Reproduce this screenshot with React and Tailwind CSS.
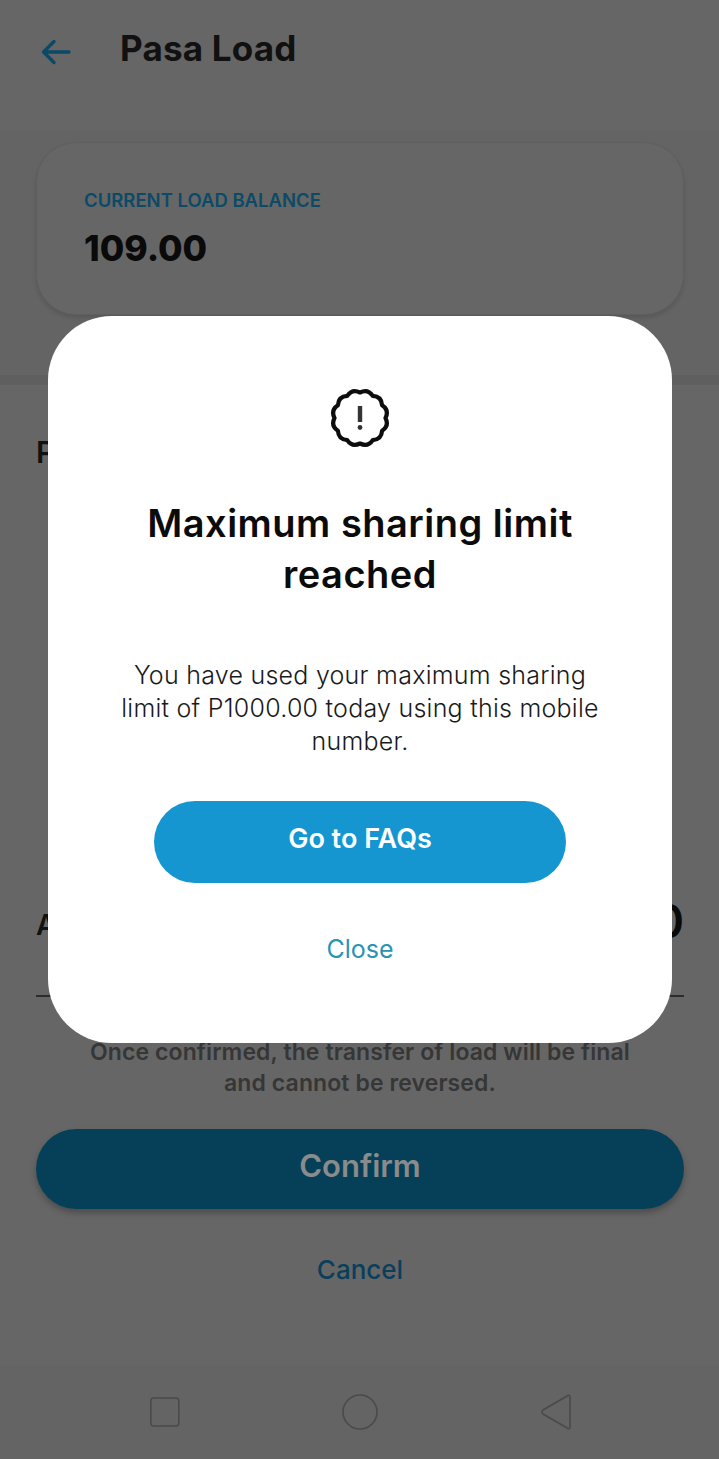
import React from 'react';

const font = 'font-["Inter","Liberation_Sans",sans-serif]';

// 12 scallops around the centre, with a dip straight up at the top
const badgePath = () => {
  const pt = (r, deg) => {
    const a = (deg * Math.PI) / 180;
    return `${(30 + r * Math.cos(a)).toFixed(2)} ${(30 + r * Math.sin(a)).toFixed(2)}`;
  };
  let d = `M${pt(25.5, -90)}`;
  for (let i = 0; i < 12; i++) {
    const start = -90 + i * 30;
    d += ` Q${pt(30.5, start + 15)} ${pt(25.5, start + 30)}`;
  }
  return d + ' Z';
};

const NavIcons = () => (
  <div className="mt-auto h-[94px] bg-[#646464] flex items-center justify-center gap-[162px] pl-[3px] pb-[1px]">
    <svg width="30" height="32" viewBox="0 0 30 32" fill="none" stroke="#4a4a4a" strokeWidth="1.6">
      <rect x="0.8" y="2" width="28" height="28" rx="3" />
    </svg>
    <svg width="36" height="36" viewBox="0 0 36 36" fill="none" stroke="#4a4a4a" strokeWidth="1.6">
      <circle cx="18" cy="18" r="17" />
    </svg>
    <svg width="32" height="36" viewBox="0 0 32 36" fill="none" stroke="#4a4a4a" strokeWidth="1.6">
      <path d="M28 1.5 L3 16 Q1 18 3 20 L28 34.5 Q30 35 30 33 V3 Q30 1 28 1.5 Z" />
    </svg>
  </div>
);

const Modal = () => (
  <div className="absolute left-[48px] top-[316px] w-[624px] h-[727px] bg-white rounded-[64px] flex flex-col items-center pt-[72px]">
    <svg width="60" height="60" viewBox="0 0 60 60" fill="none" stroke="#0d0d0d" strokeWidth="4.2" strokeLinejoin="round">
      <path d={badgePath()} />
      <path d="M30 18 V34" strokeWidth="4.4" stroke="#333333" />
      <circle cx="30" cy="39.5" r="2.4" fill="#333333" stroke="none" />
    </svg>
    <h2 className="mt-[50px] w-[480px] text-center text-[38px] leading-[51px] font-semibold text-[#0b0b0b] tracking-[0.5px]">
      Maximum sharing limit reached
    </h2>
    <p className="mt-[59px] w-[500px] text-center text-[25px] leading-[33px] font-light text-[#1a1a1a] tracking-[0.25px]">
      You have used your maximum sharing limit of P1000.00 today using this mobile number.
    </p>
    <button className="mt-[43px] w-[412px] h-[82px] pb-[5px] rounded-full bg-[#1596d1] text-white text-[27px] font-semibold">
      Go to FAQs
    </button>
    <span className="mt-[48px] text-[25px] leading-[36px] text-[#2a93b4]">Close</span>
  </div>
);

export default function App() {
  return (
    <div className={`relative w-[719px] h-[1459px] overflow-hidden bg-[#666666] flex flex-col ${font}`}>
      <header className="h-[130px] flex items-start pl-[41px] pt-[28px]">
        <svg className="mt-[9px]" width="30" height="30" viewBox="0 0 30 30" fill="none" stroke="#0a4a66" strokeWidth="3.4" strokeLinecap="round" strokeLinejoin="round">
          <path d="M28 15 H3 M13 4.5 L2.5 15 L13 25.5" />
        </svg>
        <h1 className="ml-[49px] text-[35px] leading-[40px] font-bold text-[#111111] tracking-[0.2px]">Pasa Load</h1>
      </header>

      <section className="h-[245px] bg-[#646464] pl-[36px] pr-[35px] pt-[12px]">
        <div className="h-[173px] rounded-[40px] border border-[#5f5f5f] bg-[#666666] shadow-[0_3px_4px_rgba(0,0,0,0.12)] pl-[47px] pt-[45px]">
          <p className="text-[18.5px] leading-[24px] font-semibold text-[#0c4a66]">CURRENT LOAD BALANCE</p>
          <p className="mt-[14px] text-[35.5px] leading-[46px] font-extrabold text-[#0a0a0a]">109.00</p>
        </div>
      </section>
      <div className="h-[10px] bg-[#5f5f5f]" />

      <div className="flex-1 flex flex-col pl-[36px] pr-[35px]">
        <p className="mt-[49px] text-[30px] leading-[36px] font-semibold text-[#111111]">Pasa Load to</p>

        <div className="mt-[426px] h-[101px] flex justify-between border-b-2 border-[#2c2c2c]">
          <span className="mt-[11px] text-[28px] leading-[36px] font-semibold text-[#111111]">Amount</span>
          <span className="text-[46px] leading-[50px] font-semibold text-[#0a0a0a]">0</span>
        </div>

        <p className="mt-[40px] text-center text-[23px] leading-[31px] font-semibold text-[#363636] tracking-[0.1px]">
          Once confirmed, the transfer of load will be final
          <br />
          and cannot be reversed.
        </p>

        <button className="mt-[30px] h-[80px] pb-[6px] rounded-full bg-[#064058] shadow-[0_4px_6px_rgba(0,0,0,0.25)] text-[31px] font-semibold text-[#8b8b8b]">
          Confirm
        </button>
        <span className="mt-[43px] text-center text-[26px] leading-[36px] font-medium text-[#093f5a]">Cancel</span>
      </div>

      <NavIcons />
      <Modal />
    </div>
  );
}
